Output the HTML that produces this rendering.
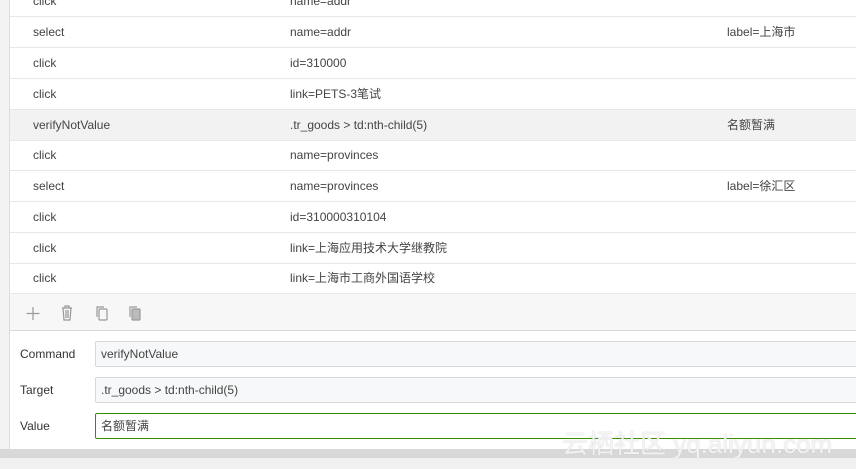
<!DOCTYPE html>
<html><head><meta charset="utf-8"><style>
body{margin:0;width:856px;height:469px;overflow:hidden;background:#f0f0f0;font-family:"Liberation Sans","Noto Sans CJK SC",sans-serif;font-size:12px;color:#444;position:relative}
.left{position:absolute;left:0;top:0;width:9px;height:449px;background:#f3f3f3;border-right:1px solid #ddd}
.main{position:absolute;left:10px;top:0;width:846px;height:449px;background:#fff}
.row{position:absolute;left:0;width:846px;height:30px;border-bottom:1px solid #e8e8e8;line-height:30px}
.row span{position:absolute}
.c1{left:23px}.c2{left:280px}.c3{left:717px}
.sel{background:#f1f2f1}
.tb{position:absolute;left:0;top:294px;width:846px;height:36px;background:#f7f7f7;border-bottom:1px solid #d8d8d8}
.lbl{position:absolute;left:10px;font-size:12px;color:#333}
.inp{position:absolute;left:85px;width:770px;height:26px;border:1px solid #d8d8d8;border-radius:2px;background:#f7f8f9;line-height:25px;padding-left:5px;box-sizing:border-box}
.bot{position:absolute;left:0;top:449px;width:856px;height:9px;background:#d8d8d8}
.wm{position:absolute;left:562px;top:424px;font-size:26px;color:rgba(255,255,255,.8);text-shadow:0 0 1px #bbb}
</style></head><body>
<div class="left"></div>
<div class="main">
<div class="row" style="top:-14px"><span class="c1">click</span><span class="c2">name=addr</span></div>
<div class="row" style="top:17px"><span class="c1">select</span><span class="c2">name=addr</span><span class="c3">label=上海市</span></div>
<div class="row" style="top:48px"><span class="c1">click</span><span class="c2">id=310000</span></div>
<div class="row" style="top:79px"><span class="c1">click</span><span class="c2">link=PETS-3笔试</span></div>
<div class="row sel" style="top:110px"><span class="c1">verifyNotValue</span><span class="c2">.tr_goods &gt; td:nth-child(5)</span><span class="c3">名额暂满</span></div>
<div class="row" style="top:140px"><span class="c1">click</span><span class="c2">name=provinces</span></div>
<div class="row" style="top:171px"><span class="c1">select</span><span class="c2">name=provinces</span><span class="c3">label=徐汇区</span></div>
<div class="row" style="top:202px"><span class="c1">click</span><span class="c2">id=310000310104</span></div>
<div class="row" style="top:233px"><span class="c1">click</span><span class="c2">link=上海应用技术大学继教院</span></div>
<div class="row" style="top:263px"><span class="c1">click</span><span class="c2">link=上海市工商外国语学校</span></div>
<div class="tb">
<svg width="846" height="36" style="position:absolute;left:0;top:0" fill="none" stroke="#999" stroke-width="1.2">
<path d="M23 13v13M16.5 19.5h13"/>
<path d="M52 14h10M55 14v-2h4v2M53 14l1 12h6l1-12M56 16v8M58 16v8"/>
<rect x="89" y="15" width="8" height="11" rx="1"/><path d="M87 23v-10h7"/>
<rect x="122" y="15" width="8" height="11" rx="1" fill="#bbb"/><path d="M120 23v-10h7"/>
</svg></div>
<div class="lbl" style="top:347px">Command</div>
<div class="inp" style="top:341px">verifyNotValue</div>
<div class="lbl" style="top:383px">Target</div>
<div class="inp" style="top:377px">.tr_goods &gt; td:nth-child(5)</div>
<div class="lbl" style="top:419px">Value</div>
<div class="inp" style="top:413px;border-color:#3c8c00;background:#fff">名额暂满</div>
</div>
<div class="bot"></div>
<div class="wm">云栖社区 yq.aliyun.com</div>
</body></html>
